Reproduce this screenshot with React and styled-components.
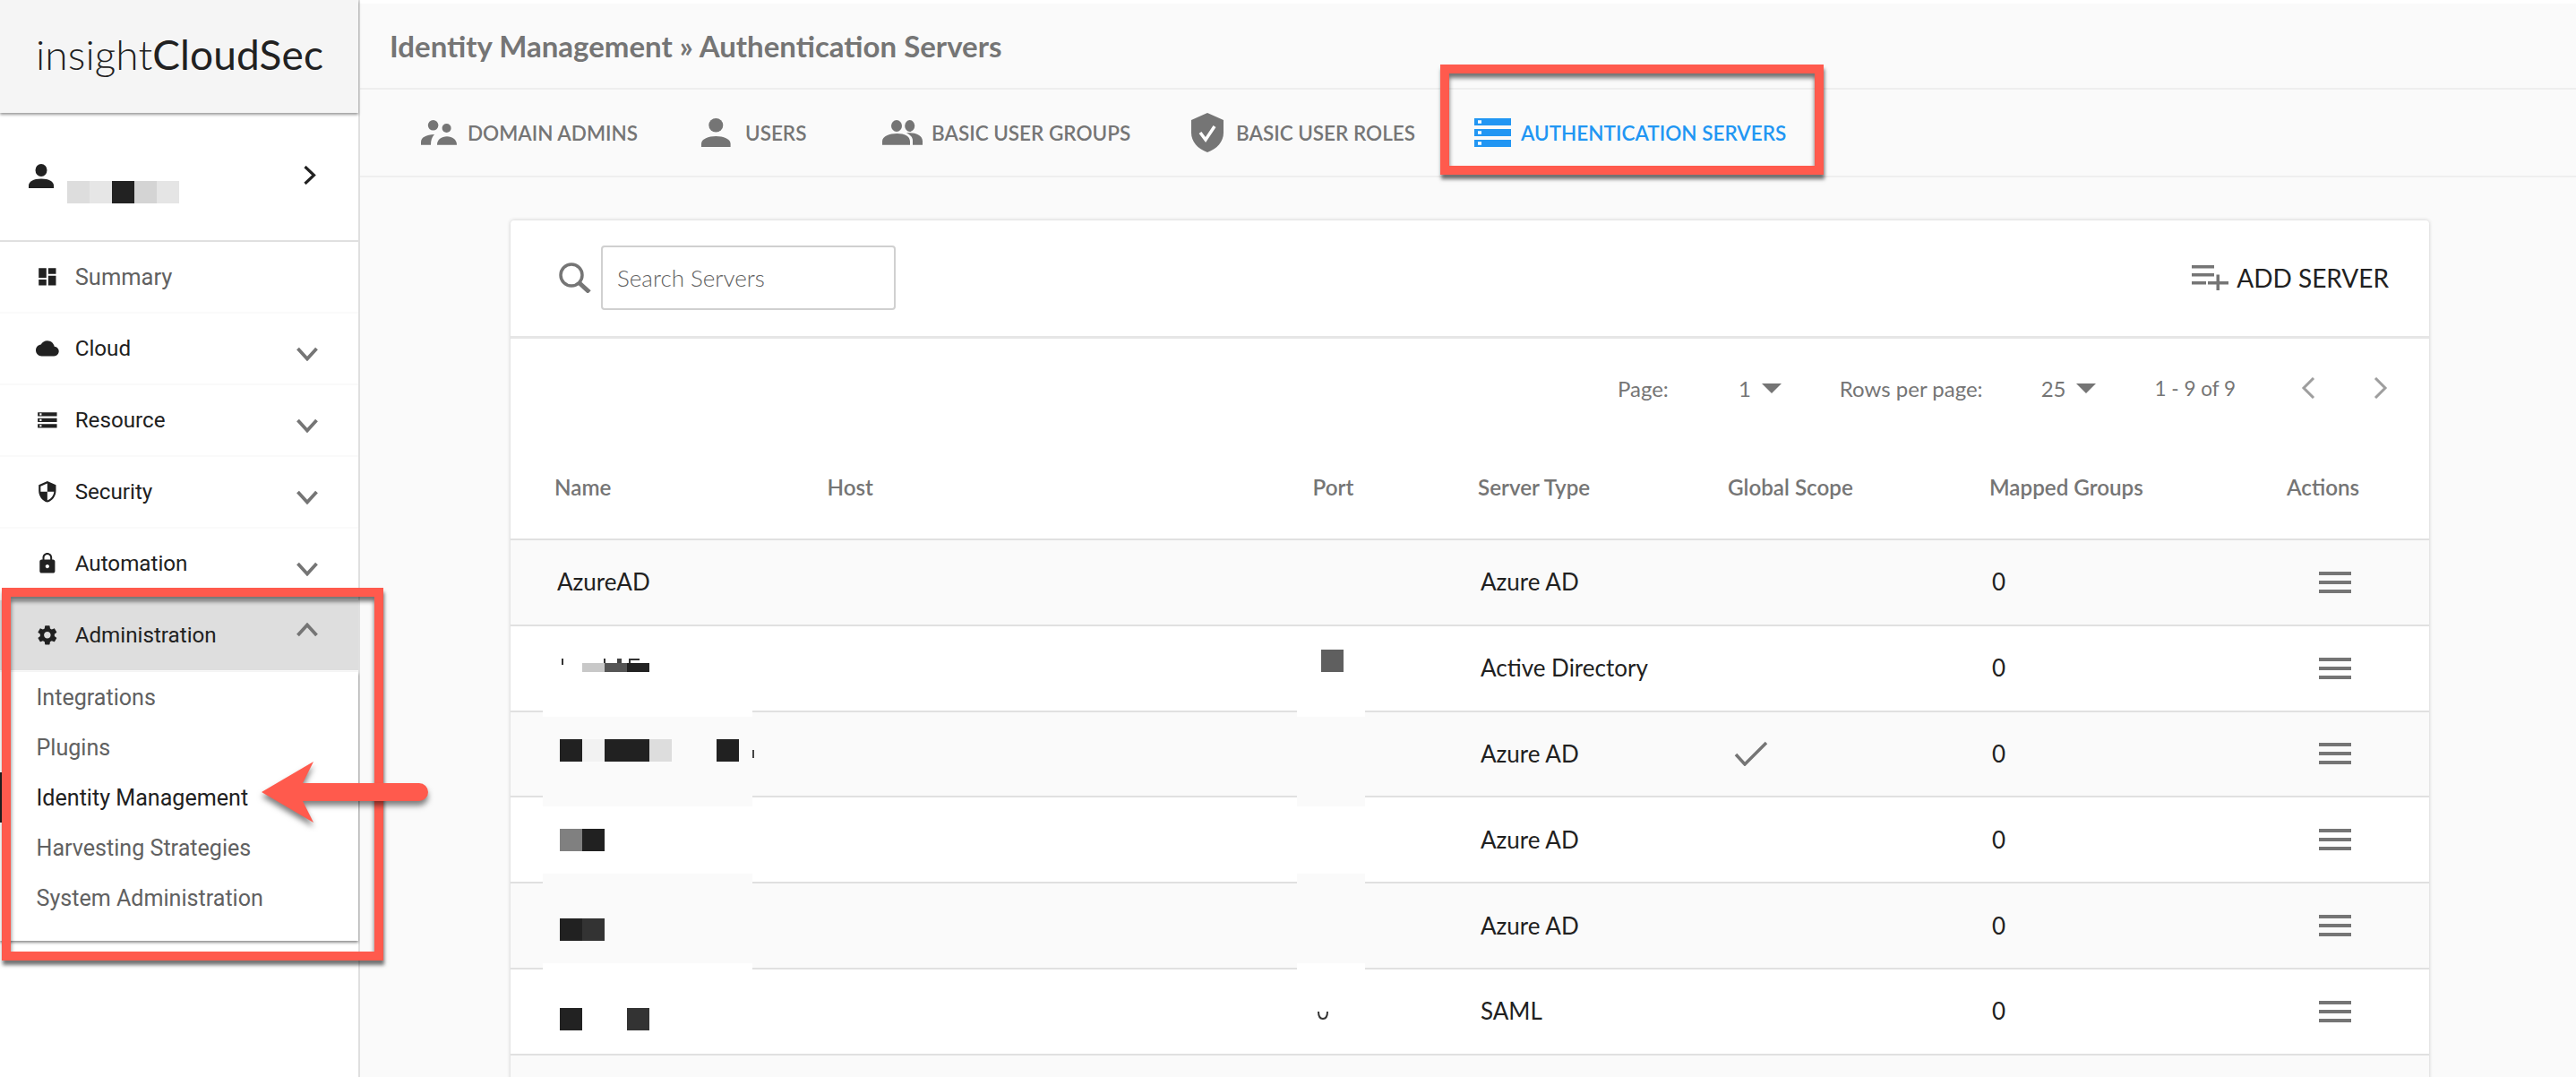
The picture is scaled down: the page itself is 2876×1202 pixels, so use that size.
import React from "react";
import styled, { createGlobalStyle } from "styled-components";

const GlobalStyle = createGlobalStyle`
  html, body {
    margin: 0;
    padding: 0;
    background: #fff;
  }
  * {
    box-sizing: border-box;
  }
`;

const Page = styled.div`
  position: relative;
  display: grid;
  grid-template-columns: 402px 1fr;
  width: 2876px;
  height: 1202px;
  overflow: hidden;
  font-family: Lato, "Open Sans", sans-serif;
`;

/* sidebar */

const Sidebar = styled.aside`
  display: flex;
  flex-direction: column;
  border-right: 2px solid #e0e0e0;
  background: #fff;
  font-family: Roboto, sans-serif;
`;

const Brand = styled.div`
  display: flex;
  align-items: center;
  height: 126px;
  padding: 0 0 6px 40px;
  background: #f5f5f5;
  box-shadow: 0 2px 3px rgba(0, 0, 0, 0.4);
  font-family: Lato, sans-serif;
  font-size: 46px;
  letter-spacing: 0.1px;
  color: #212121;
  position: relative;
`;

const BrandLight = styled.span`
  font-weight: 300;
`;

const UserBox = styled.div`
  display: flex;
  align-items: flex-start;
  height: 144px;
  padding: 57px 47px 0 32px;
  border-bottom: 2px solid #e0e0e0;
`;

const UserName = styled.div`
  display: flex;
  margin: 19px auto 0 15px;
`;

const NameCell = styled.span`
  width: 25px;
  height: 25px;
  background: ${(p) => p.$c};
`;

const UserChevron = styled.svg`
  margin-top: 2px;
  fill: none;
  stroke: #212121;
  stroke-width: 3.2;
`;

const NavItem = styled.div`
  display: flex;
  align-items: center;
  height: 80px;
  padding: 0 45px 0 40px;
  border-bottom: 2px solid #fafafa;
  background: ${(p) => (p.$open ? "#dedede" : "#fff")};
  font-size: ${(p) => (p.$muted ? "25.5px" : "24.2px")};
  color: ${(p) => (p.$muted ? "#616161" : "#212121")};
`;

const NavIcon = styled.svg`
  flex: none;
  width: 25.7px;
  height: 25.7px;
  margin-right: 18px;
  fill: #212121;
`;

const NavLabel = styled.span`
  flex: 1;
`;

const NavChevron = styled.svg`
  width: 24px;
  height: 16px;
  margin-top: ${(p) => (p.$up ? "-12px" : "12px")};
  fill: none;
  stroke: #757575;
  stroke-width: 3.8;
`;

const SubMenu = styled.div`
  padding: 0 0 20px;
  background: #fff;
  box-shadow: 0 2px 3px rgba(0, 0, 0, 0.45);
`;

const SubItem = styled.div`
  display: flex;
  align-items: center;
  height: 56px;
  padding-left: 37.5px;
  border-left: 3px solid ${(p) => (p.$active ? "#212121" : "transparent")};
  font-size: 25.1px;
  color: ${(p) => (p.$active ? "#212121" : "#616161")};
`;

/* main area */

const Main = styled.main`
  display: flex;
  flex-direction: column;
  min-width: 0;
  border-top: 4px solid #fff;
  background: #fafafa;
`;

const TitleBar = styled.h1`
  display: flex;
  align-items: center;
  height: 96px;
  margin: 0;
  padding: 0 0 0 33px;
  border-bottom: 2px solid #eee;
  font-size: 33px;
  font-weight: 700;
  color: #757575;
`;

const Tabs = styled.nav`
  display: flex;
  align-items: center;
  height: 98px;
  padding-left: 68px;
  border-bottom: 2px solid #eee;
`;

const Tab = styled.div`
  display: flex;
  align-items: center;
  flex: none;
  width: ${(p) => p.$w}px;
  gap: ${(p) => p.$gap}px;
  font-size: 22.5px;
  font-weight: 600;
  white-space: nowrap;
  color: ${(p) => (p.$active ? "#2196f3" : "#757575")};
`;

const Card = styled.section`
  flex: 1;
  width: 2142px;
  margin: 48px 0 0 168px;
  border-radius: 4px 4px 0 0;
  background: #fff;
  box-shadow: 0 0 4px rgba(0, 0, 0, 0.2);
`;

const SearchBar = styled.div`
  display: flex;
  align-items: center;
  height: 132px;
  padding: 0 45px 2px 54px;
  border-bottom: 3px solid #e6e6e6;
`;

const SearchInput = styled.div`
  display: flex;
  align-items: center;
  width: 329px;
  height: 72px;
  margin-left: 11px;
  padding-left: 16px;
  border: 2px solid #d0d0d0;
  border-radius: 4px;
  font-size: 26px;
  font-weight: 300;
  color: #616161;
`;

const AddServer = styled.div`
  display: flex;
  align-items: center;
  gap: 9px;
  margin-left: auto;
  font-size: 28px;
  font-weight: 400;
  color: #212121;
`;

const Pager = styled.div`
  display: flex;
  align-items: center;
  justify-content: flex-end;
  height: 110px;
  padding: 0 46px 0 0;
  font-size: 24px;
  font-weight: 400;
  color: #757575;
`;

const PagerText = styled.span`
  margin-right: ${(p) => p.$after}px;
`;

const PagerRange = styled.span`
  font-size: 22.5px;
`;

const Caret = styled.span`
  width: 0;
  height: 0;
  margin: 0 ${(p) => p.$after}px 0 12px;
  border-style: solid;
  border-width: 11px 11px 0;
  border-color: #757575 transparent transparent;
`;

const PagerChevron = styled.svg`
  width: 16px;
  height: 24px;
  margin-left: ${(p) => p.$before}px;
  fill: none;
  stroke: #9e9e9e;
  stroke-width: 3;
`;

const grid = "304.5px 542px 184.5px 279px 292px 332px 1fr";

const HeadRow = styled.div`
  display: grid;
  grid-template-columns: ${grid};
  align-items: center;
  height: 115px;
  padding-left: 49px;
  padding-bottom: 2px;
  border-bottom: 2px solid #e0e0e0;
  font-size: 24.2px;
  font-weight: 600;
  color: #757575;
`;

const Body = styled.div`
  position: relative;
`;

const Row = styled.div`
  display: grid;
  grid-template-columns: ${grid};
  align-items: center;
  height: 95.8px;
  padding-left: 49px;
  border-bottom: 2px solid #e0e0e0;
  background: ${(p) => (p.$odd ? "#fafafa" : "#fff")};
  font-size: 26px;
  color: #212121;
`;

const Cell = styled.div`
  padding: 0 0 1px 3px;
  white-space: nowrap;
`;

const CheckIcon = styled.svg`
  display: block;
  width: 38px;
  height: 28px;
  margin-left: 4px;
  fill: none;
  stroke: #757575;
  stroke-width: 3.5;
`;

const MenuIcon = styled.div`
  display: flex;
  flex-direction: column;
  justify-content: space-between;
  width: 36px;
  height: 24px;
  margin-left: 36px;
`;

const MenuBar = styled.span`
  height: 4px;
  background: #757575;
`;

const LastRow = styled.div`
  height: 40px;
  background: #fafafa;
`;

/* pixelated redaction blocks laid over the table */
const Patch = styled.div`
  position: absolute;
  left: ${(p) => p.$x - 570}px;
  top: ${(p) => p.$y - 605}px;
  width: ${(p) => p.$w}px;
  height: ${(p) => p.$h}px;
  background: ${(p) => p.$c};
`;

const PortMark = styled.svg`
  position: absolute;
  left: 900px;
  top: 525px;
  width: 14px;
  height: 11px;
  fill: none;
  stroke: #333;
  stroke-width: 2;
`;

/* red annotations laid over the screenshot */
const Frame = styled.div`
  position: absolute;
  left: ${(p) => p.$x}px;
  top: ${(p) => p.$y}px;
  width: ${(p) => p.$w}px;
  height: ${(p) => p.$h}px;
  border: 10px solid #ff5a4d;
  box-shadow: 1px 5px 4px rgba(0, 0, 0, 0.55), inset 0 5px 5px rgba(0, 0, 0, 0.55);
`;

const Arrow = styled.svg`
  position: absolute;
  left: 285px;
  top: 840px;
  width: 205px;
  height: 95px;
  overflow: visible;
  filter: drop-shadow(0 5px 3px rgba(0, 0, 0, 0.5));
`;

const navIcons = {
  Summary: "M3 13h8V3H3v10zm0 8h8v-6H3v6zm10 0h8V11h-8v10zm0-18v6h8V3h-8z",
  Cloud: "M19.35 10.04C18.67 6.59 15.64 4 12 4 9.11 4 6.6 5.64 5.35 8.04 2.34 8.36 0 10.91 0 14c0 3.31 2.69 6 6 6h13c2.76 0 5-2.24 5-5 0-2.64-2.05-4.78-4.65-4.96z",
  Resource: "M2 20h20v-4H2v4zm2-3h2v2H4v-2zM2 4v4h20V4H2zm4 3H4V5h2v2zm-4 7h20v-4H2v4zm2-3h2v2H4v-2z",
  Security: "M12 1L3 5v6c0 5.55 3.84 10.74 9 12 5.16-1.26 9-6.45 9-12V5l-9-4zm0 10.99h7c-.53 4.12-3.28 7.79-7 8.94V12H5V6.3l7-3.11v8.8z",
  Automation: "M18 8h-1V6c0-2.76-2.24-5-5-5S7 3.24 7 6v2H6c-1.1 0-2 .9-2 2v10c0 1.1.9 2 2 2h12c1.1 0 2-.9 2-2V10c0-1.1-.9-2-2-2zm-6 9c-1.1 0-2-.9-2-2s.9-2 2-2 2 .9 2 2-.9 2-2 2zm3.1-9H8.9V6c0-1.71 1.39-3.1 3.1-3.1 1.71 0 3.1 1.39 3.1 3.1v2z",
  Administration: "M19.43 12.98c.04-.32.07-.64.07-.98s-.03-.66-.07-.98l2.11-1.65c.19-.15.24-.42.12-.64l-2-3.46c-.12-.22-.39-.3-.61-.22l-2.49 1c-.52-.4-1.08-.73-1.69-.98l-.38-2.65C14.46 2.18 14.25 2 14 2h-4c-.25 0-.46.18-.49.42l-.38 2.65c-.61.25-1.17.59-1.69.98l-2.49-1c-.23-.09-.49 0-.61.22l-2 3.46c-.13.22-.07.49.12.64l2.11 1.65c-.04.32-.07.65-.07.98s.03.66.07.98l-2.11 1.65c-.19.15-.24.42-.12.64l2 3.46c.12.22.39.3.61.22l2.49-1c.52.4 1.08.73 1.69.98l.38 2.65c.03.24.24.42.49.42h4c.25 0 .46-.18.49-.42l.38-2.65c.61-.25 1.17-.59 1.69-.98l2.49 1c.23.09.49 0 .61-.22l2-3.46c.12-.22.07-.49-.12-.64l-2.11-1.65zM12 15.5c-1.93 0-3.5-1.57-3.5-3.5s1.57-3.5 3.5-3.5 3.5 1.57 3.5 3.5-1.57 3.5-3.5 3.5z",
};

const navItems = ["Summary", "Cloud", "Resource", "Security", "Automation"];
const subItems = ["Integrations", "Plugins", "Identity Management", "Harvesting Strategies", "System Administration"];

const rows = [
  { name: "AzureAD", type: "Azure AD" },
  { type: "Active Directory" },
  { type: "Azure AD", global: true },
  { type: "Azure AD" },
  { type: "Azure AD" },
  { type: "SAML" },
];

const patches = [
  // name column cover-ups
  { x: 606, y: 744, w: 234, h: 58, c: "#fff" },
  { x: 606, y: 802, w: 234, h: 100, c: "#fafafa" },
  { x: 606, y: 977, w: 234, h: 100, c: "#fafafa" },
  { x: 606, y: 1077, w: 234, h: 93, c: "#fff" },
  // port column cover-ups
  { x: 1448, y: 701, w: 76, h: 101, c: "#fff" },
  { x: 1448, y: 802, w: 76, h: 100, c: "#fafafa" },
  { x: 1448, y: 977, w: 76, h: 100, c: "#fafafa" },
  { x: 1448, y: 1077, w: 76, h: 93, c: "#fff" },
  // pixels
  { x: 627, y: 737, w: 2, h: 7, c: "#333" },
  { x: 674, y: 737, w: 2, h: 5, c: "#333" },
  { x: 689, y: 737, w: 5, h: 5, c: "#444" },
  { x: 702, y: 737, w: 12, h: 2, c: "#333" },
  { x: 702, y: 739, w: 2, h: 3, c: "#333" },
  { x: 650, y: 742, w: 25, h: 10, c: "#c8c8c8" },
  { x: 675, y: 742, w: 25, h: 10, c: "#555" },
  { x: 700, y: 742, w: 25, h: 10, c: "#222" },
  { x: 1475, y: 727, w: 25, h: 25, c: "#5f5f5f" },
  { x: 625, y: 827, w: 25, h: 25, c: "#212121" },
  { x: 650, y: 827, w: 25, h: 25, c: "#f2f2f2" },
  { x: 675, y: 827, w: 50, h: 25, c: "#212121" },
  { x: 725, y: 827, w: 25, h: 25, c: "#ddd" },
  { x: 800, y: 827, w: 25, h: 25, c: "#212121" },
  { x: 840, y: 839, w: 2, h: 9, c: "#444" },
  { x: 625, y: 927, w: 25, h: 25, c: "#808080" },
  { x: 650, y: 927, w: 25, h: 25, c: "#212121" },
  { x: 625, y: 1027, w: 25, h: 25, c: "#212121" },
  { x: 650, y: 1027, w: 25, h: 25, c: "#333" },
  { x: 625, y: 1127, w: 25, h: 25, c: "#222" },
  { x: 700, y: 1127, w: 25, h: 25, c: "#333" },
];

const DomainAdminsIcon = () => (
  <svg width="40" height="28" viewBox="0 0 40 28" fill="#757575">
    <circle cx="13.600" cy="5.800" r="5.800" />
    <circle cx="28.600" cy="9" r="5" />
    <path d="M0 27.700v-3C0 19 6 16.500 15 16c-3 3-4 7-4 11.700zM18 27.700c0-6 5-9.500 11-9.500s11 3.500 11 9.500z" />
  </svg>
);

const UserIcon = () => (
  <svg width="33" height="32" viewBox="0 0 33 32" fill="#757575">
    <ellipse cx="16.300" cy="7.700" rx="8" ry="7.700" />
    <path d="M0 32v-3.500C0 23 8 20 16.300 20s16.300 3 16.300 8.500V32z" />
  </svg>
);

const GroupIcon = () => (
  <svg width="45" height="28" viewBox="0 0 45 28" fill="#757575">
    <ellipse cx="16" cy="6.500" rx="6" ry="6.500" />
    <ellipse cx="30.700" cy="6.500" rx="5.500" ry="6.500" />
    <path d="M0 27.700v-4C0 18 8 15 16.500 15S31 18 31 24v3.700zM27 14.500c6-1 18 1 18 9v4.200H34v-5c0-3-2-6-7-8.200z" />
  </svg>
);

const RoleIcon = () => (
  <svg width="36" height="44" viewBox="0 0 36 44">
    <path fill="#757575" d="M18 0L36 8v14c0 10-7 18-18 22C7 40 0 32 0 22V8z" />
    <path fill="none" stroke="#fff" strokeWidth="3.500" d="M10 22l6 8 10-15" />
  </svg>
);

const ServerIcon = () => (
  <svg width="41" height="32" viewBox="0 0 41 32" fill="#2196f3">
    <path d="M0 0h41v8H0zM0 12h41v8H0zM0 24h41v8H0z" />
    <path fill="#fff" d="M4 2.300h4v3.500H4zM4 14.300h4v3.500H4zM4 26.300h4v3.500H4z" />
  </svg>
);

const SearchIcon = () => (
  <svg width="36" height="34" viewBox="0 0 36 34" fill="none" stroke="#757575">
    <circle cx="14" cy="14" r="12" strokeWidth="3.500" />
    <path d="M23 23l11 10" strokeWidth="5" />
  </svg>
);

const AddIcon = () => (
  <svg width="41" height="28" viewBox="0 0 41 28" fill="#757575">
    <path d="M0 0h25v3.500H0zM0 9h25v3.500H0zM0 18h16v3.500H0zM18 18h9.500V10.500h3.500V18H41v3.500H31V28h-3.500v-6.500H18z" />
  </svg>
);

const App = () => (
  <Page>
    <GlobalStyle />
    <Sidebar>
      <Brand>
        <BrandLight>insight</BrandLight>CloudSec
      </Brand>
      <UserBox>
        <svg width="28" height="27" viewBox="0 0 28 27" fill="#212121">
          <ellipse cx="14" cy="7" rx="6.500" ry="7" />
          <path d="M0 27v-3c0-4 5-7.500 14-7.500S28 20 28 24v3z" />
        </svg>
        <UserName>
          {["#ddd", "#e6e6e6", "#222", "#d4d4d4", "#e5e5e5"].map((c, i) => (
            <NameCell key={i} $c={c} />
          ))}
        </UserName>
        <UserChevron width="14" height="21" viewBox="0 0 14 21">
          <path d="M1.500 1l10 9.500-10 9.500" />
        </UserChevron>
      </UserBox>
      {navItems.map((item) => (
        <NavItem key={item} $muted={item === "Summary"}>
          <NavIcon viewBox="0 0 24 24">
            <path d={navIcons[item]} />
          </NavIcon>
          <NavLabel>{item}</NavLabel>
          {item !== "Summary" && (
            <NavChevron viewBox="0 0 24 16">
              <path d="M1.500 2L12 13.500 22.500 2" />
            </NavChevron>
          )}
        </NavItem>
      ))}
      <NavItem $open>
        <NavIcon viewBox="0 0 24 24">
          <path d={navIcons.Administration} />
        </NavIcon>
        <NavLabel>Administration</NavLabel>
        <NavChevron $up viewBox="0 0 24 16">
          <path d="M1.500 14L12 2.500 22.500 14" />
        </NavChevron>
      </NavItem>
      <SubMenu>
        {subItems.map((item) => (
          <SubItem key={item} $active={item === "Identity Management"}>
            {item}
          </SubItem>
        ))}
      </SubMenu>
    </Sidebar>

    <Main>
      <TitleBar>Identity Management » Authentication Servers</TitleBar>
      <Tabs>
        <Tab $w={313} $gap={12}>
          <DomainAdminsIcon />
          DOMAIN ADMINS
        </Tab>
        <Tab $w={202} $gap={16}>
          <UserIcon />
          USERS
        </Tab>
        <Tab $w={345} $gap={10}>
          <GroupIcon />
          BASIC USER GROUPS
        </Tab>
        <Tab $w={316} $gap={14}>
          <RoleIcon />
          BASIC USER ROLES
        </Tab>
        <Tab $w={400} $gap={11} $active>
          <ServerIcon />
          AUTHENTICATION SERVERS
        </Tab>
      </Tabs>

      <Card>
        <SearchBar>
          <SearchIcon />
          <SearchInput>Search Servers</SearchInput>
          <AddServer>
            <AddIcon />
            ADD SERVER
          </AddServer>
        </SearchBar>
        <Pager>
          <PagerText $after={78}>Page:</PagerText>
          1
          <Caret $after={65} />
          <PagerText $after={65}>Rows per page:</PagerText>
          25
          <Caret $after={65} />
          <PagerRange>1 - 9 of 9</PagerRange>
          <PagerChevron $before={73} viewBox="0 0 16 24">
            <path d="M14 1L3 12l11 11" />
          </PagerChevron>
          <PagerChevron $before={65} viewBox="0 0 16 24">
            <path d="M2 1l11 11L2 23" />
          </PagerChevron>
        </Pager>
        <HeadRow>
          <div>Name</div>
          <div>Host</div>
          <div>Port</div>
          <div>Server Type</div>
          <div>Global Scope</div>
          <div>Mapped Groups</div>
          <div>Actions</div>
        </HeadRow>
        <Body>
          {rows.map((row, i) => (
            <Row key={i} $odd={i % 2 === 0}>
              <Cell>{row.name}</Cell>
              <Cell />
              <Cell />
              <Cell>{row.type}</Cell>
              <Cell>
                {row.global && (
                  <CheckIcon viewBox="0 0 38 28">
                    <path d="M2 15l10 11L36 2" />
                  </CheckIcon>
                )}
              </Cell>
              <Cell>0</Cell>
              <MenuIcon>
                <MenuBar />
                <MenuBar />
                <MenuBar />
              </MenuIcon>
            </Row>
          ))}
          <LastRow />
          {patches.map((p, i) => (
            <Patch key={i} $x={p.x} $y={p.y} $w={p.w} $h={p.h} $c={p.c} />
          ))}
          <PortMark viewBox="0 0 14 11">
            <path d="M2 1c0 5 1 8 5 8s5-3 5-8" />
          </PortMark>
        </Body>
      </Card>
    </Main>

    <Frame $x={2} $y={656} $w={426} $h={416} />
    <Frame $x={1608} $y={72} $w={428} $h={123} />
    <Arrow viewBox="0 0 205 95">
      <path
        fill="#ff5a4d"
        d="M7 44L65 10 53 34H183a10 10 0 0 1 0 20H53l12 24z"
      />
    </Arrow>
  </Page>
);

export default App;
